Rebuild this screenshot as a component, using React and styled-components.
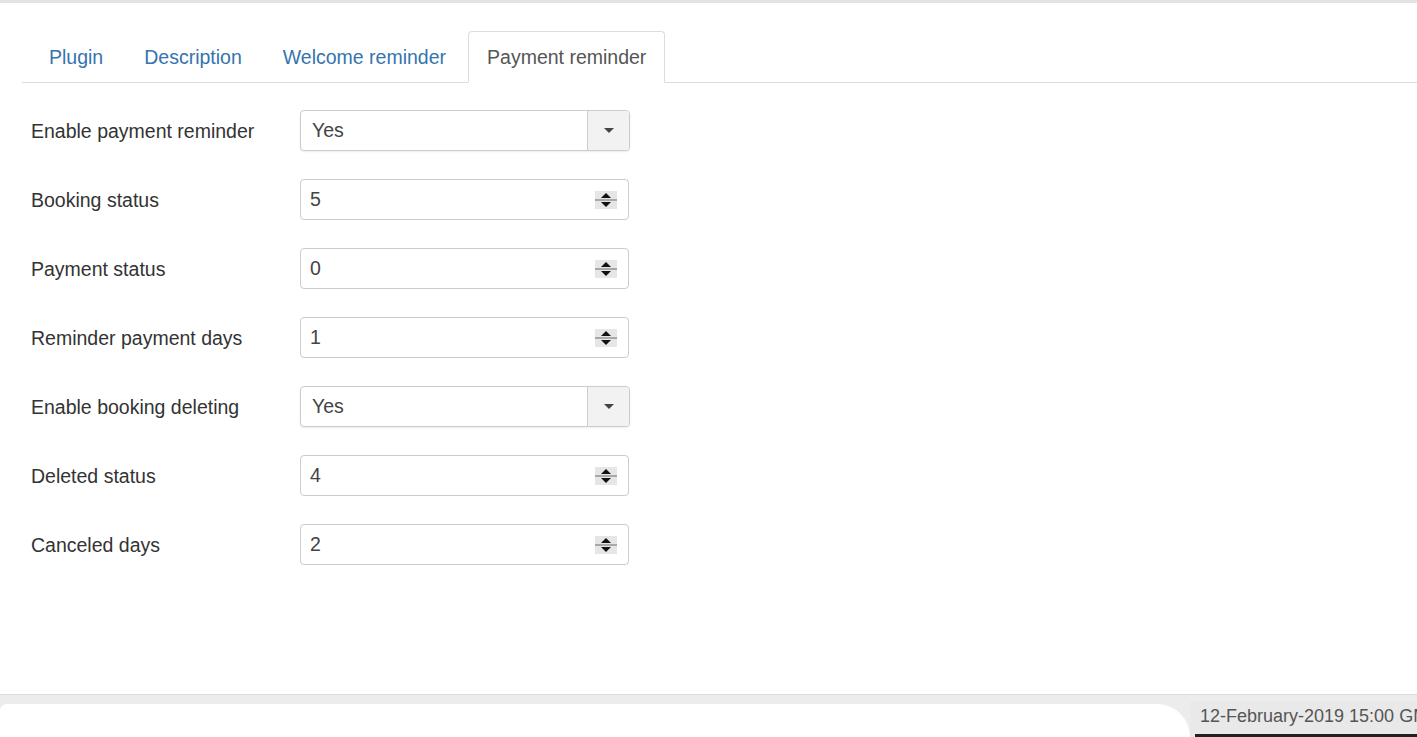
import React from "react";
import styled, { createGlobalStyle } from "styled-components";

const Global = createGlobalStyle`
  html, body { margin: 0; padding: 0; background: #fff; }
  body { font-family: "Liberation Sans", Arial, sans-serif; overflow: hidden; }
  * { box-sizing: border-box; }
`;

const Page = styled.div`
  height: 737px;
  display: flex;
  flex-direction: column;
  border-top: 3px solid #e3e3e3;
`;

const Main = styled.div`
  flex: 1;
  padding: 28px 0 0 22px;
`;

const Tabs = styled.ul`
  list-style: none;
  margin: 0;
  padding: 0 0 0 8px;
  display: flex;
  border-bottom: 1px solid #ddd;
  height: 52px;
`;

const Tab = styled.li`
  margin-right: 3px;
  padding: 1px 18px 0;
  height: 52px;
  display: flex;
  align-items: center;
  font-size: 19.5px;
  color: ${(p) => (p.$active ? "#555" : "#3574ae")};
  background: ${(p) => (p.$active ? "#fff" : "transparent")};
  border: 1px solid ${(p) => (p.$active ? "#ddd" : "transparent")};
  border-bottom-color: ${(p) => (p.$active ? "#fff" : "transparent")};
  border-radius: 4px 4px 0 0;
  margin-bottom: -1px;
`;

const Form = styled.div`
  margin-top: 27px;
  display: flex;
  flex-direction: column;
  gap: 28px;
`;

const Row = styled.div`
  display: flex;
  align-items: center;
  height: 41px;
`;

const Label = styled.div`
  width: 278px;
  padding: 2px 0 0 9px;
  font-size: 19.5px;
  color: #333;
`;

const Field = styled.div`
  width: ${(p) => (p.$select ? "330px" : "329px")};
  height: 41px;
  border: 1px solid #ccc;
  border-radius: 4px;
  display: flex;
  align-items: center;
  font-size: 19.5px;
  color: #444;
  background: #fff;
  box-shadow: ${(p) => (p.$select ? "0 1px 2px rgba(0,0,0,0.08)" : "none")};
  overflow: hidden;
`;

const Value = styled.div`
  flex: 1;
  padding-left: ${(p) => (p.$select ? "11px" : "9px")};
`;

const CaretBox = styled.div`
  width: 42px;
  height: 100%;
  border-left: 1px solid #ccc;
  background: #f2f2f2;
  display: flex;
  align-items: center;
  justify-content: center;
`;

const Spin = styled.div`
  width: 22px;
  margin-right: 11px;
  display: flex;
  align-items: center;
`;

const Footer = styled.div`
  height: 43px;
  position: relative;
  background: #ececec;
  border-top: 1px solid #dcdcdc;
  display: flex;
  justify-content: flex-end;
`;

const Redact = styled.div`
  position: absolute;
  left: 0;
  top: 9px;
  width: 1190px;
  bottom: 0;
  background: #fff;
  border-radius: 8px 40px 0 0;
`;

const DateBox = styled.div`
  width: 227px;
  margin-top: 6px;
  padding-left: 10px;
  background: #e9e9e9;
  font-size: 18px;
  color: #555;
  white-space: nowrap;
  overflow: hidden;
  position: relative;
  line-height: 30px;
`;

const DarkBar = styled.div`
  position: absolute;
  left: 5px;
  right: 0;
  bottom: 0;
  height: 3px;
  background: #222;
`;

const Caret = () => (
  <svg width="10" height="6" viewBox="0 0 10 6">
    <path d="M0 0 H10 L5 5 Z" fill="#444" />
  </svg>
);

const Spinner = () => (
  <svg width="22" height="18" viewBox="0 0 22 18">
    <rect x="0" y="0" width="22" height="18" fill="#e6e6e6" />
    <rect x="0" y="8" width="22" height="2" fill="#a8a8a8" />
    <path d="M6 7 L11 2 L16 7 Z" fill="#111" />
    <path d="M6 11 L11 16 L16 11 Z" fill="#111" />
  </svg>
);

const rows = [
  { label: "Enable payment reminder", value: "Yes", select: true },
  { label: "Booking status", value: "5" },
  { label: "Payment status", value: "0" },
  { label: "Reminder payment days", value: "1" },
  { label: "Enable booking deleting", value: "Yes", select: true },
  { label: "Deleted status", value: "4" },
  { label: "Canceled days", value: "2" },
];

export default function App() {
  return (
    <>
      <Global />
      <Page>
        <Main>
          <Tabs>
            <Tab>Plugin</Tab>
            <Tab>Description</Tab>
            <Tab>Welcome reminder</Tab>
            <Tab $active>Payment reminder</Tab>
          </Tabs>
          <Form>
            {rows.map((r) => (
              <Row key={r.label}>
                <Label>{r.label}</Label>
                <Field $select={r.select}>
                  <Value $select={r.select}>{r.value}</Value>
                  {r.select ? (
                    <CaretBox>
                      <Caret />
                    </CaretBox>
                  ) : (
                    <Spin>
                      <Spinner />
                    </Spin>
                  )}
                </Field>
              </Row>
            ))}
          </Form>
        </Main>
        <Footer>
          <Redact />
          <DateBox>
            12-February-2019 15:00 GMT
            <DarkBar />
          </DateBox>
        </Footer>
      </Page>
    </>
  );
}
